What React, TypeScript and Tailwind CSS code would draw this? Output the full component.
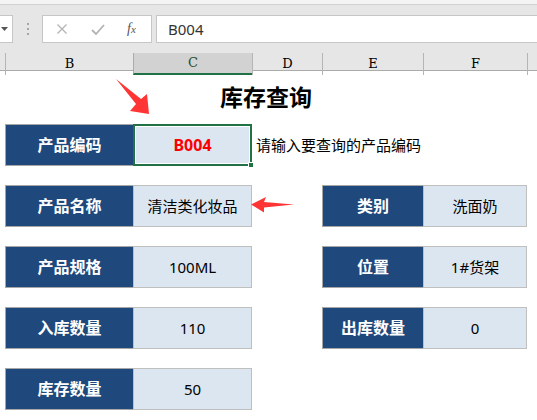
const COLS = "grid grid-cols-[5px_128px_119px_70px_101px_104px_1fr]"

function Label({ text }: { text: string }) {
  return (
    <div className="flex items-center justify-center bg-[#1f497d] border-l border-y border-[#a6a6a6] text-white font-bold text-[16px]">
      {text}
    </div>
  )
}

function Value({ text }: { text: string }) {
  return (
    <div className="flex items-center justify-center bg-[#dce6f1] border border-[#bfbfbf] text-black text-[15px]">
      {text}
    </div>
  )
}

function Row({ children }: { children: React.ReactNode }) {
  return <div className={`${COLS} h-[42px] mt-[19px]`}>{children}</div>
}

export default function App() {
  const heads = ["B", "C", "D", "E", "F", ""]
  return (
    <div
      className="relative w-[537px] h-[420px] overflow-hidden bg-white"
      style={{ fontFamily: '"Noto Sans", "Noto Sans CJK SC", sans-serif' }}
    >
      {/* ribbon edge */}
      <div className="h-[5px] bg-[#f3f3f3] border-b border-[#d2d2d2]" />

      {/* formula bar */}
      <div className="h-[47px] bg-[#e6e6e6] flex items-start pt-[10px]">
        <div className="w-[13px] h-[28px] bg-white border border-l-0 border-[#c6c6c6] flex items-center">
          <svg width="7" height="4" viewBox="0 0 7 4" className="ml-[1px]">
            <path d="M0 0h7L3.5 4z" fill="#555" />
          </svg>
        </div>
        <div className="w-[29px] h-[28px] flex flex-col items-center justify-center gap-[3px]">
          <span className="w-[2px] h-[2px] bg-[#a5a5a5]" />
          <span className="w-[2px] h-[2px] bg-[#a5a5a5]" />
          <span className="w-[2px] h-[2px] bg-[#a5a5a5]" />
        </div>
        <div className="w-[110px] h-[28px] bg-white border border-[#c6c6c6] flex items-center">
          <svg width="10" height="10" viewBox="0 0 10 10" className="ml-[14px]">
            <path d="M0.5 0.5l9 9M9.5 0.5l-9 9" stroke="#b3b3b3" strokeWidth="1.3" />
          </svg>
          <svg width="14" height="11" viewBox="0 0 14 11" className="ml-[24px]">
            <path d="M1 6l4 4 8-9" stroke="#b3b3b3" strokeWidth="1.8" fill="none" />
          </svg>
          <span
            className="ml-[22px] italic text-[#555] text-[14px] leading-none"
            style={{ fontFamily: '"Liberation Serif", serif' }}
          >
            f<span className="text-[11px]">x</span>
          </span>
        </div>
        <div className="flex-1 ml-[4px] h-[28px] bg-white border border-r-0 border-[#c6c6c6] flex items-center pl-[11px] text-[15px] text-[#333]">
          B004
        </div>
      </div>

      {/* column headers */}
      <div
        className={`${COLS} h-[19px] bg-[#e6e6e6] border-b border-[#ababab] text-[13px] text-black`}
        style={{ fontFamily: '"DejaVu Serif", "Liberation Serif", serif' }}
      >
        <div />
        {heads.map((h) =>
          h === "C" ? (
            <div
              key={h}
              className="mt-[1px] flex items-center justify-center bg-[#d2d2d2] border-l border-[#ababab] border-b-2 border-b-[#217346] text-[#1d4f31]"
            >
              {h}
            </div>
          ) : (
            <div key={h || "g"} className="mt-[1px] flex items-center justify-center border-l border-[#b5b5b5]">
              {h}
            </div>
          ),
        )}
      </div>

      {/* sheet body */}
      <div className="flex flex-col">
        <div className="h-[53px] ml-[5px] w-[522px] flex items-center justify-center pb-[1px] text-[23px] font-bold text-black">
          库存查询
        </div>

        <div className={`${COLS} h-[42px]`}>
          <div />
          <Label text="产品编码" />
          <div className="relative flex items-center justify-center bg-[#dce6f1] border-2 border-[#217346] shadow-[inset_0_0_0_1px_#ffffff] text-[#ff0000] font-bold text-[16px]">
            B004
            <span className="absolute -right-[4px] -bottom-[4px] w-[6px] h-[6px] bg-[#217346] border border-white" />
          </div>
          <div className="flex items-center pl-[4px] whitespace-nowrap text-[15px] text-black">
            请输入要查询的产品编码
          </div>
        </div>

        <Row>
          <div />
          <Label text="产品名称" />
          <Value text="清洁类化妆品" />
          <div />
          <Label text="类别" />
          <Value text="洗面奶" />
        </Row>
        <Row>
          <div />
          <Label text="产品规格" />
          <Value text="100ML" />
          <div />
          <Label text="位置" />
          <Value text="1#货架" />
        </Row>
        <Row>
          <div />
          <Label text="入库数量" />
          <Value text="110" />
          <div />
          <Label text="出库数量" />
          <Value text="0" />
        </Row>
        <Row>
          <div />
          <Label text="库存数量" />
          <Value text="50" />
        </Row>
      </div>

      {/* red arrows */}
      <svg className="absolute inset-0 pointer-events-none" width="537" height="420">
        <polygon
          points="116,79 141,99 147,94 149,114 130,111 136,104"
          fill="#ff3434"
        />
        <polygon
          points="251,204.5 266,197 264,202 294,204.5 264,207.5 264,212.5"
          fill="#ff3434"
        />
      </svg>
    </div>
  )
}
